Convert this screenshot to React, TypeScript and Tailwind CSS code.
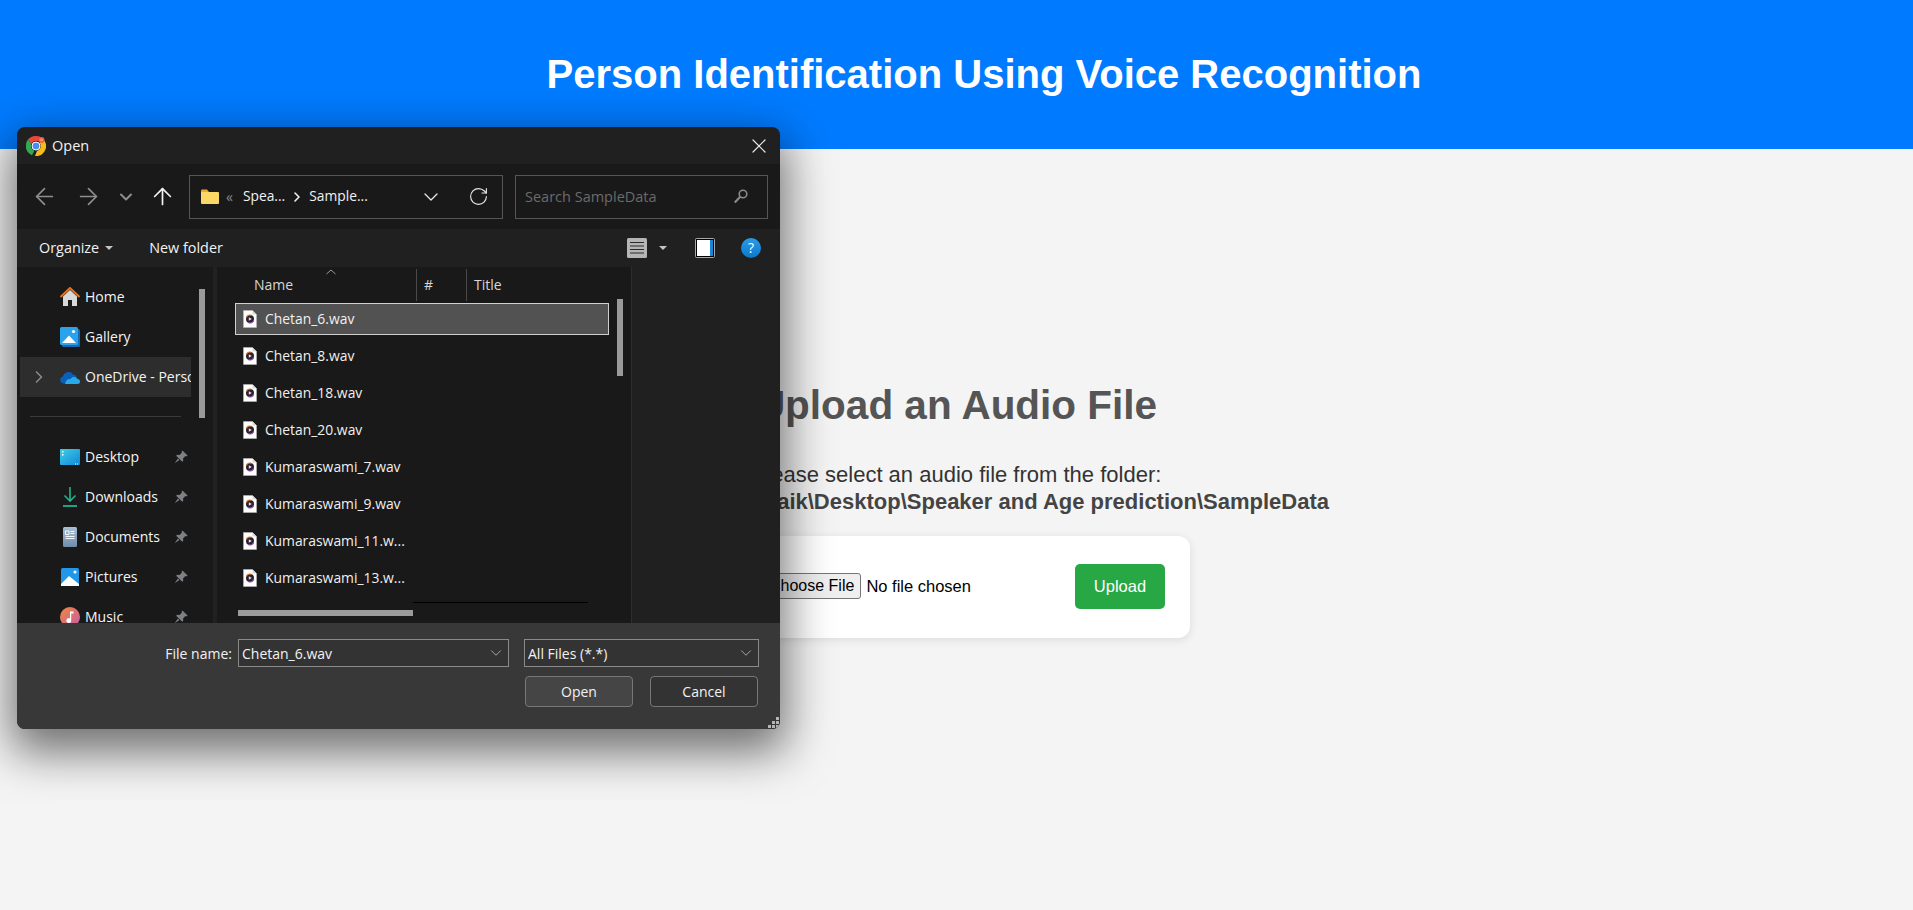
import { ArrowLeft, ArrowRight, ArrowUp, ChevronDown, ChevronRight, RotateCw, X } from 'lucide-react'

const segoe = "font-['Open_Sans',sans-serif]"

const files = [
  'Chetan_6.wav',
  'Chetan_8.wav',
  'Chetan_18.wav',
  'Chetan_20.wav',
  'Kumaraswami_7.wav',
  'Kumaraswami_9.wav',
  'Kumaraswami_11.w...',
  'Kumaraswami_13.w...',
]

function ChromeLogo() {
  return (
    <svg width="20" height="20" viewBox="0 0 20 20">
      <path d="M10 0a10 10 0 0 1 8.66 5H10a5 5 0 0 0-4.6 3L2 3.6A10 10 0 0 1 10 0z" fill="#e8453c" />
      <path d="M2 3.6 5.4 8a5 5 0 0 0 3 6.7L6 19.2A10 10 0 0 1 2 3.6z" fill="#34a853" />
      <path d="M18.66 5A10 10 0 0 1 9 20l2-5.1A5 5 0 0 0 14 7.5V5z" fill="#f9bc15" />
      <circle cx="10" cy="10" r="4" fill="#4a8cf0" stroke="#fff" strokeWidth="1" />
      <circle cx="15.5" cy="4" r="3" fill="#e8603c" />
      <circle cx="15.5" cy="4" r="1" fill="none" stroke="#ffd2b8" strokeWidth="0.6" />
    </svg>
  )
}

function FolderIcon() {
  return (
    <svg width="18" height="15" viewBox="0 0 18 15">
      <path d="M0 1.5A1 1 0 0 1 1 .5h5l2 2.5H0z" fill="#e9a92c" />
      <path d="M0 3h17a1 1 0 0 1 1 1v10a1 1 0 0 1-1 1H1a1 1 0 0 1-1-1z" fill="#fbd866" />
    </svg>
  )
}

function WavIcon() {
  return (
    <svg width="14" height="18" viewBox="0 0 14 18">
      <path d="M.5.5h9l4 4v13H.5z" fill="#fff" stroke="#b8b8b8" strokeWidth="0.6" />
      <path d="M9.5.5v4h4" fill="#d8d8d8" />
      <circle cx="7" cy="9" r="4" fill="#2a2230" />
      <path d="M3.300 7.500A4 4 0 0 1 8.500 5.300" fill="none" stroke="#e8792e" strokeWidth="1.200" />
      <path d="M10.700 10.500A4 4 0 0 1 5.500 12.700" fill="none" stroke="#a24fc0" strokeWidth="1.200" />
      <path d="M5.800 7.300 8.800 9l-3 1.700z" fill="#e8e0ee" />
    </svg>
  )
}

function HomeIcon() {
  return (
    <svg width="20" height="20" viewBox="0 0 20 20">
      <path d="M3 9.5 10 3l7 6.500V19h-5v-6H8v6H3z" fill="#d9d9d9" />
      <path d="M0.500 10 10 1l9.500 9" fill="none" stroke="#e2711d" strokeWidth="2" />
    </svg>
  )
}

function GalleryIcon() {
  return (
    <svg width="20" height="20" viewBox="0 0 20 20">
      <rect x="2" y="2" width="18" height="18" rx="1.500" fill="#1668b8" />
      <rect x="0" y="0" width="18" height="18" rx="1.500" fill="#2ba3ec" />
      <path d="M2 16 9 8.500 16 16z" fill="#fff" />
      <circle cx="13.500" cy="4.500" r="1.600" fill="#fff" />
    </svg>
  )
}

function OneDriveIcon() {
  return (
    <svg width="20" height="13" viewBox="0 0 20 13">
      <path d="M7 12.500H3.500A3.500 3.500 0 0 1 3 5.600 5.500 5.500 0 0 1 13 3.500 4.500 4.500 0 0 1 17 8z" fill="#0a5fb8" />
      <path d="M5 13h12.500a2.500 2.500 0 0 0 0-5c-1-2.500-5.500-3-7 0-2.500-.5-5 1.500-5.500 5z" fill="#29a8ea" />
    </svg>
  )
}

function DesktopIcon() {
  return (
    <svg width="20" height="16" viewBox="0 0 20 16">
      <defs>
        <linearGradient id="desk" x1="0" y1="0" x2="1" y2="1">
          <stop offset="0" stopColor="#3fd0e6" />
          <stop offset="1" stopColor="#1086d8" />
        </linearGradient>
      </defs>
      <rect width="20" height="16" rx="1" fill="url(#desk)" />
      <rect x="2" y="2" width="1.500" height="1.500" fill="#fff" />
      <rect x="2" y="5" width="1.500" height="1.500" fill="#fff" />
      <rect x="15" y="14.500" width="1" height="1" fill="#fff" />
      <rect x="17" y="14.500" width="1" height="1" fill="#fff" />
    </svg>
  )
}

function DownloadIcon() {
  return (
    <svg width="16" height="20" viewBox="0 0 16 20" fill="none" stroke="#22b28c" strokeWidth="1.600">
      <path d="M8 0v14M2.500 8.500 8 14l5.500-5.500" />
      <path d="M1 19h14" strokeWidth="1.800" />
    </svg>
  )
}

function DocumentsIcon() {
  return (
    <svg width="14" height="20" viewBox="0 0 14 20">
      <defs>
        <linearGradient id="docs" x1="0" y1="0" x2="0" y2="1">
          <stop offset="0" stopColor="#a9bfd6" />
          <stop offset="1" stopColor="#6f8cab" />
        </linearGradient>
      </defs>
      <rect width="14" height="20" rx="1.500" fill="url(#docs)" />
      <path d="M2.500 4h3.500v3.500H2.500zM7.500 4.500h4M7.500 6.500h4M2.500 9.500h9M2.500 11.500h9" stroke="#fff" strokeWidth="0.900" fill="none" />
    </svg>
  )
}

function PicturesIcon() {
  return (
    <svg width="18" height="18" viewBox="0 0 18 18">
      <rect width="18" height="18" rx="1.500" fill="#2097e8" />
      <path d="M0 16 8 8l10 8v2H0z" fill="#fff" />
      <circle cx="14" cy="4" r="1.600" fill="#fff" />
    </svg>
  )
}

function MusicIcon() {
  return (
    <svg width="20" height="20" viewBox="0 0 20 20">
      <defs>
        <linearGradient id="music" x1="0" y1="0" x2="1" y2="1">
          <stop offset="0" stopColor="#ee8a3c" />
          <stop offset="1" stopColor="#c85aa8" />
        </linearGradient>
      </defs>
      <circle cx="10" cy="10" r="10" fill="url(#music)" />
      <path d="M10 4.500h3.500v2H11.200v7a2.400 2.400 0 1 1-1.200-2z" fill="#fff" />
    </svg>
  )
}

function PinIcon() {
  return (
    <svg width="14" height="14" viewBox="0 0 13 13" fill="#7d8186">
      <path d="M7.800.4 12.600 5.200 11.400 6 10.600 5.600 8.400 7.800 8.600 10 7.600 11 2 5.400 3 4.400 5.200 4.600 7.400 2.400 7 1.600z" />
      <path d="M3.600 8 .6 12.400 5 9.400z" />
    </svg>
  )
}

function SearchGlyph() {
  return (
    <svg width="14" height="15" viewBox="0 0 14 15" fill="none" stroke="#8a8a8a" strokeWidth="1.600">
      <circle cx="9" cy="5" r="3.800" />
      <path d="M6.200 7.800.8 13.500" strokeWidth="2.200" />
    </svg>
  )
}

function ViewIcon() {
  return (
    <svg width="20" height="20" viewBox="0 0 20 20">
      <rect width="20" height="20" rx="1.500" fill="#b5b5b5" />
      <path d="M3 4.500h14M3 8h14M3 11.500h14M3 15h14" stroke="#2a2a2a" strokeWidth="1" />
    </svg>
  )
}

function PaneIcon() {
  return (
    <svg width="20" height="20" viewBox="0 0 20 20">
      <rect x="0.500" y="0.500" width="19" height="19" rx="1" fill="#000" stroke="#a8a8a8" />
      <rect x="2" y="2" width="13" height="16" fill="#fff" />
      <rect x="15" y="2" width="3" height="16" fill="#1a86d8" />
    </svg>
  )
}

function HelpIcon() {
  return (
    <div className="flex h-5 w-5 items-center justify-center rounded-full bg-gradient-to-b from-[#2a9be8] to-[#0b78cc] text-[14px] leading-none text-white">
      ?
    </div>
  )
}

function Caret() {
  return <div className="h-0 w-0 border-x-[4px] border-t-[4px] border-x-transparent border-t-[#c4c4c4]" />
}

function Grip() {
  return (
    <svg width="12" height="12" viewBox="0 0 12 12" fill="#b5b5b5">
      <rect x="8" y="0" width="3" height="3" />
      <rect x="4" y="4" width="3" height="3" />
      <rect x="8" y="4" width="3" height="3" />
      <rect x="0" y="8" width="3" height="3" />
      <rect x="4" y="8" width="3" height="3" />
      <rect x="8" y="8" width="3" height="3" />
    </svg>
  )
}

function NavItem({ icon, label, pinned, active }: { icon: React.ReactNode; label: string; pinned?: boolean; active?: boolean }) {
  return (
    <div className={`relative flex h-[40px] w-[171px] shrink-0 items-center ${active ? 'bg-[#2d2d2d]' : ''}`}>
      {active && <ChevronRight className="absolute left-[9px] h-[20px] w-[20px] text-[#8c8c8c]" strokeWidth={1.800} />}
      <div className="ml-[40px] flex w-[20px] shrink-0 justify-center">{icon}</div>
      <span className="ml-[5px] whitespace-nowrap pb-[2px] text-[14px] text-[#f4f4f4]">{label}</span>
      {pinned && (
        <div className="absolute left-[154px]">
          <PinIcon />
        </div>
      )}
    </div>
  )
}

function Sidebar() {
  return (
    <div className="flex h-full w-[196px] shrink-0 bg-[#191919]">
      <div className="h-full w-[174px] overflow-hidden pl-[3px] pt-[10px]">
        <NavItem icon={<HomeIcon />} label="Home" />
        <NavItem icon={<GalleryIcon />} label="Gallery" />
        <div className="w-[171px] overflow-hidden">
          <NavItem icon={<OneDriveIcon />} label="OneDrive - Personal" active />
        </div>
        <div className="flex h-[40px] items-center pb-[2px] pl-[10px]">
          <div className="h-px w-[151px] bg-[#3a3a3a]" />
        </div>
        <NavItem icon={<DesktopIcon />} label="Desktop" pinned />
        <NavItem icon={<DownloadIcon />} label="Downloads" pinned />
        <NavItem icon={<DocumentsIcon />} label="Documents" pinned />
        <NavItem icon={<PicturesIcon />} label="Pictures" pinned />
        <NavItem icon={<MusicIcon />} label="Music" pinned />
      </div>
      <div className="ml-[8px] mt-[22px] h-[129px] w-[6px] bg-[#9a9a9a]" />
    </div>
  )
}

function FilePane() {
  return (
    <div className="relative h-full w-[414px] shrink-0 overflow-hidden bg-[#191919]">
      <svg className="absolute left-[108px] top-[2px]" width="12" height="6" viewBox="0 0 12 6" fill="none" stroke="#9a9a9a">
        <path d="M1.500 5 6 1l4.500 4" />
      </svg>
      <div className="flex h-[36px] items-center text-[14px] text-[#d6d6d6]">
        <div className="flex h-[32px] w-[200px] items-center border-r border-[#4a4a4a] pb-[2px] pl-[37px]">Name</div>
        <div className="flex h-[32px] w-[50px] items-center border-r border-[#4a4a4a] pb-[2px] pl-[7px]">#</div>
        <div className="pb-[2px] pl-[7px]">Title</div>
      </div>
      <div className="ml-[18px] flex w-[374px] flex-col gap-[5px]">
        {files.map((name, i) => (
          <div
            key={name}
            className={`flex h-[32px] shrink-0 items-center ${i === 0 ? 'border border-[#d0d0d0] bg-[#525252] pl-[7px]' : 'pl-[8px]'}`}
          >
            <WavIcon />
            <span className="ml-[8px] whitespace-nowrap text-[13.900px] text-[#f0f0f0]">{name}</span>
          </div>
        ))}
      </div>
      <div className="absolute left-[400px] top-[32px] h-[77px] w-[6px] bg-[#9a9a9a]" />
      <div className="absolute left-[196px] top-[335px] h-px w-[175px] bg-black" />
      <div className="absolute left-[21px] top-[343px] h-[6px] w-[175px] bg-[#9a9a9a]" />
    </div>
  )
}

function OpenDialog() {
  return (
    <div
      className={`absolute left-[17px] top-[127px] flex h-[602px] w-[763px] flex-col overflow-hidden rounded-lg bg-[#202020] text-[14px] text-[#f2f2f2] shadow-[0_17px_46px_6px_rgba(0,0,0,0.55)] ${segoe}`}
    >
      <div className="flex h-[37px] shrink-0 items-center pl-[9px]">
        <ChromeLogo />
        <span className="ml-[6px] text-[14.500px]">Open</span>
        <X className="ml-auto mr-[9px] h-[24px] w-[24px] text-[#e8e8e8]" strokeWidth={1.200} />
      </div>

      <div className="flex h-[65px] shrink-0 items-center bg-[#191919] pl-[5px]">
        <div className="flex w-[44px] justify-center">
          <ArrowLeft className="h-[27px] w-[27px] text-[#8f8f8f]" strokeWidth={1.500} />
        </div>
        <div className="flex w-[44px] justify-center">
          <ArrowRight className="h-[27px] w-[27px] text-[#8f8f8f]" strokeWidth={1.500} />
        </div>
        <div className="flex w-[32px] justify-center">
          <ChevronDown className="h-[20px] w-[20px] text-[#8f8f8f]" strokeWidth={2.400} />
        </div>
        <div className="flex w-[40px] justify-center">
          <ArrowUp className="h-[27px] w-[27px] text-[#f2f2f2]" strokeWidth={1.500} />
        </div>
        <div className="ml-[7px] flex h-[44px] w-[314px] items-center border border-[#555] pl-[11px]">
          <FolderIcon />
          <span className="ml-[7px] text-[14px] leading-none text-[#8a8a8a]">«</span>
          <span className="ml-[10px] text-[13.800px]">Spea...</span>
          <ChevronRight className="ml-[4px] h-[16px] w-[16px] text-[#f0f0f0]" strokeWidth={2.400} />
          <span className="ml-[4px] text-[13.800px]">Sample...</span>
          <ChevronDown className="ml-auto h-[24px] w-[24px] text-[#e8e8e8]" strokeWidth={1.300} />
          <RotateCw className="ml-[25px] mr-[13px] h-[21px] w-[21px] text-[#e8e8e8]" strokeWidth={1.300} />
        </div>
        <div className="ml-[12px] flex h-[44px] w-[253px] items-center border border-[#555] pl-[9px] pr-[19px] text-[14.500px] text-[#6b6b6b]">
          <span>Search SampleData</span>
          <div className="ml-auto">
            <SearchGlyph />
          </div>
        </div>
      </div>

      <div className="flex h-[38px] shrink-0 items-center pl-[22px] text-[14.400px]">
        <span>Organize</span>
        <div className="ml-[6px]">
          <Caret />
        </div>
        <span className="ml-[36px]">New folder</span>
        <div className="ml-auto flex items-center pr-[19px]">
          <ViewIcon />
          <div className="ml-[12px]">
            <Caret />
          </div>
          <div className="ml-[28px]">
            <PaneIcon />
          </div>
          <div className="ml-[26px]">
            <HelpIcon />
          </div>
        </div>
      </div>

      <div className="flex h-[356px] shrink-0">
        <Sidebar />
        <div className="w-[4px] shrink-0 bg-[#212121]" />
        <FilePane />
        <div className="flex-1 border-l border-[#2e2e2e] bg-[#202020]" />
      </div>

      <div className="relative flex-1 bg-[#383838]">
        <div className="mt-[16px] flex h-[28px] items-center">
          <div className="w-[215px] text-right">File name:</div>
          <div className="ml-[6px] flex h-[28px] w-[271px] items-center border border-[#8a8a8a] bg-[#333] pl-[3px] pr-[3px]">
            <span>Chetan_6.wav</span>
            <ChevronDown className="ml-auto h-[18px] w-[18px] text-[#bdbdbd]" strokeWidth={1.100} />
          </div>
          <div className="ml-[15px] flex h-[28px] w-[235px] items-center border border-[#8a8a8a] bg-[#333] pl-[3px] pr-[3px]">
            <span>All Files (*.*)</span>
            <ChevronDown className="ml-auto h-[18px] w-[18px] text-[#bdbdbd]" strokeWidth={1.100} />
          </div>
        </div>
        <div className="mt-[9px] flex pl-[508px]">
          <button className="flex h-[31px] w-[108px] items-center justify-center rounded-[4px] border border-[#777] bg-[#454545]">Open</button>
          <button className="ml-[17px] flex h-[31px] w-[108px] items-center justify-center rounded-[4px] border border-[#777] bg-[#333]">Cancel</button>
        </div>
        <div className="absolute bottom-0 right-0">
          <Grip />
        </div>
      </div>
    </div>
  )
}

export default function App() {
  return (
    <div className="relative h-[910px] overflow-hidden bg-[#f4f4f4] font-['Liberation_Sans',Arial,sans-serif]">
      <header className="flex h-[149px] items-center justify-center bg-[#007bff] pb-[2px] pl-[55px]">
        <h1 className="text-[40px] font-bold text-white">Person Identification Using Voice Recognition</h1>
      </header>

      <main className="flex flex-col items-center pt-[232px]">
        <h2 className="text-[40.500px] font-bold leading-[48px] text-[#555]">Upload an Audio File</h2>
        <p className="mt-[32px] text-center text-[22px] leading-[27px] text-[#333]">
          Please select an audio file from the folder:
          <br />
          <strong className="text-[#444]">C:\Users\Suresh Naik\Desktop\Speaker and Age prediction\SampleData</strong>
        </p>
        <div className="mt-[21px] flex h-[102px] w-[467px] items-center justify-between rounded-[12px] bg-white pb-[2px] pl-[39px] pr-[25px] shadow-[0_2px_10px_rgba(0,0,0,0.1)]">
          <div className="flex items-center">
            <button className="h-[26px] rounded-[3px] border border-[#767676] bg-[#efefef] px-[6px] text-[16px] text-black">Choose File</button>
            <span className="ml-[5px] text-[16.500px] text-black">No file chosen</span>
          </div>
          <button className="h-[45px] w-[90px] rounded-[5px] bg-[#28a745] text-[16.500px] text-white">Upload</button>
        </div>
      </main>

      <OpenDialog />
    </div>
  )
}
